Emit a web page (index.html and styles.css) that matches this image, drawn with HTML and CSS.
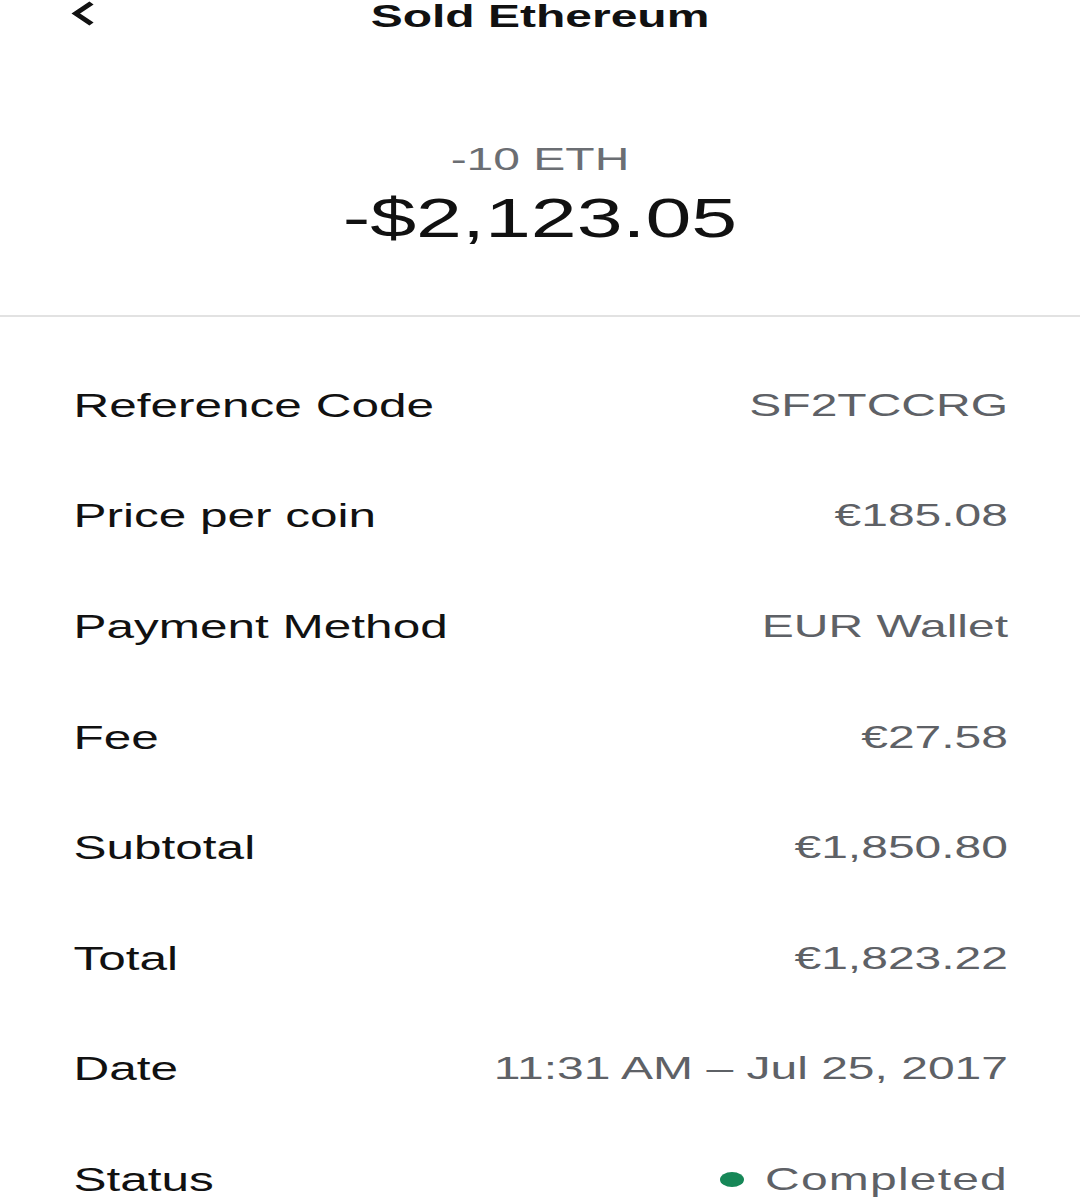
FILE: index.html
```html
<!DOCTYPE html>
<html lang="en">
<head>
  <meta charset="UTF-8">
  <title>Sold Ethereum</title>
  <link rel="stylesheet" href="styles.css">
</head>
<body>
  <div class="screen">
    <div class="header">
      <span class="back">
        <svg width="16" height="25" viewBox="0 0 16 25"><path d="M14 2 L3.5 12.5 L14 23" fill="none" stroke="#111" stroke-width="4" stroke-linejoin="miter"/></svg>
      </span>
      <h1>Sold Ethereum</h1>
    </div>

    <div class="amount">
      <div class="crypto">-10 ETH</div>
      <div class="fiat">-$2,123.05</div>
    </div>

    <ul class="details">
      <li><span>Reference Code</span><span class="value">SF2TCCRG</span></li>
      <li><span>Price per coin</span><span class="value">€185.08</span></li>
      <li><span>Payment Method</span><span class="value">EUR Wallet</span></li>
      <li><span>Fee</span><span class="value">€27.58</span></li>
      <li><span>Subtotal</span><span class="value">€1,850.80</span></li>
      <li><span>Total</span><span class="value">€1,823.22</span></li>
      <li><span>Date</span><span class="value">11:31 AM – Jul 25, 2017</span></li>
      <li><span>Status</span><span class="value status"><i class="dot"></i>Completed</span></li>
    </ul>
  </div>
</body>
</html>
```

FILE: styles.css
```css
body {
  margin: 0;
  background: #fff;
  font-family: 'Liberation Sans', Arial, sans-serif;
  color: #111;
  overflow: hidden;
}
.screen {
  width: 720px;
  transform: scaleX(1.5);
  transform-origin: 0 0;
}
.header {
  position: relative;
  height: 32px;
  display: flex;
  justify-content: center;
  align-items: center;
}
.back {
  position: absolute;
  left: 47px;
  top: 1px;
  line-height: 0;
}
h1 {
  margin: 0;
  font-size: 32px;
  line-height: 32px;
  font-weight: bold;
}
.amount {
  text-align: center;
  padding: 111px 0 69px;
  border-bottom: 2px solid #e2e2e2;
}
.crypto {
  font-size: 32px;
  line-height: 32px;
  color: #6b6e73;
}
.fiat {
  margin-top: 16px;
  font-size: 55px;
  line-height: 55px;
  color: #111;
}
.details {
  list-style: none;
  margin: 0;
  padding: 33px 48px 0 49px;
}
.details li {
  height: 110.6px;
  display: flex;
  justify-content: space-between;
  align-items: center;
  font-size: 33px;
  line-height: 33px;
}
.value {
  font-size: 32px;
  color: #5e6166;
  display: flex;
  align-items: center;
}
.status {
  letter-spacing: 0.8px;
}
.dot {
  width: 16px;
  height: 15px;
  border-radius: 50%;
  background: #168757;
  margin-right: 14px;
}
```
